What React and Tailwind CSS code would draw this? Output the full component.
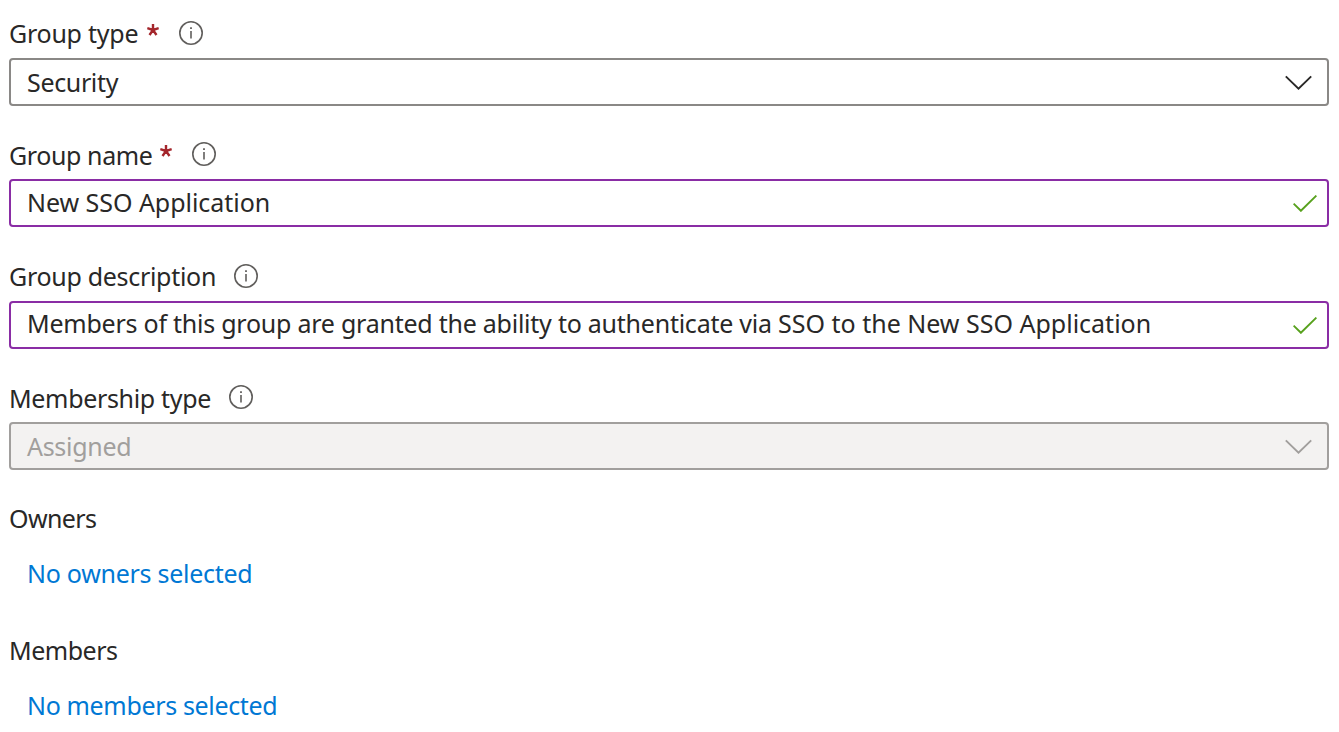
function InfoIcon({ className }) {
  return (
    <svg className={`size-6 shrink-0 ${className}`} viewBox="0 0 24 24" fill="none" stroke="#605e5c" aria-hidden="true">
      <circle cx="12" cy="12" r="11.2" strokeWidth="1.6" />
      <path d="M12 10v7.5" strokeWidth="1.6" />
      <path d="M12 6.2v1.9" strokeWidth="1.8" />
    </svg>
  );
}

function Asterisk({ className }) {
  return (
    <svg className={`mr-5 h-[12px] w-[12px] shrink-0 ${className}`} viewBox="0 0 12 12" fill="none" stroke="#a4262c" strokeWidth="2.4" aria-label="required">
      <path d="M6 6V0M6 6L.3 4.200M6 6l5.700-1.800M6 6l-3.500 5M6 6l3.500 5" />
    </svg>
  );
}

function Chevron() {
  return (
    <svg className="mr-[15px] h-[15px] w-[27px] shrink-0" viewBox="0 0 27 15" fill="none" stroke="currentColor" strokeWidth="1.9" aria-hidden="true">
      <path d="M.8 1.400l12.700 12.300L26.200 1.400" />
    </svg>
  );
}

function Check() {
  return (
    <svg className="mr-[10px] h-[17px] w-[24px] shrink-0" viewBox="0 0 24 17" fill="none" stroke="#57a11d" strokeWidth="1.9" aria-hidden="true">
      <path d="M.6 8.600l7.300 7.200L23.400.600" />
    </svg>
  );
}

function Field({ label, labelClass, asteriskClass, infoClass, value, valueClass, boxClass, children }) {
  return (
    <div className="mb-8 flex flex-col">
      <div className="flex h-[34px] items-center">
        <span className={`shrink-0 ${labelClass}`}>{label}</span>
        {asteriskClass && <Asterisk className={asteriskClass} />}
        <InfoIcon className={infoClass} />
      </div>
      <div className={`flex h-12 items-center justify-between rounded-[4px] border-2 pl-4 ${boxClass}`}>
        <span className={valueClass}>{value}</span>
        {children}
      </div>
    </div>
  );
}

export default function App() {
  return (
    <main className="flex h-[732px] w-[1339px] flex-col overflow-hidden bg-white pl-[9px] pr-[10px] pt-4 font-['Noto_Sans',sans-serif] text-[25px] leading-[34px] whitespace-nowrap text-[#292827]">
      <Field
        label="Group type"
        labelClass="w-[138px] tracking-[-0.25px]"
        asteriskClass="-mt-[7px]"
        infoClass="-mt-px"
        value="Security"
        valueClass="tracking-[-0.35px]"
        boxClass="mt-2 border-[#8a8886]"
      >
        <Chevron />
      </Field>
      <Field
        label="Group name"
        labelClass="w-[151px] tracking-[-0.4px]"
        asteriskClass="-mt-[9px]"
        infoClass="-mt-[3px]"
        value="New SSO Application"
        valueClass="-mt-[2px] tracking-[-0.04px]"
        boxClass="mt-[7px] border-[#8a2da5]"
      >
        <Check />
      </Field>
      <Field
        label="Group description"
        labelClass="w-[225px] tracking-[-0.3px]"
        infoClass="-mt-px"
        value={
          <>
            <span className="tracking-[-0.24px]">Members of this group are granted the ability to authenticate via </span>
            SSO to the New SSO Application
          </>
        }
        valueClass="-mt-[4px]"
        boxClass="mt-2 border-[#8a2da5]"
      >
        <Check />
      </Field>
      <Field
        label="Membership type"
        labelClass="w-[220px] tracking-[-0.33px]"
        infoClass="-mt-[3px]"
        value="Assigned"
        valueClass="tracking-[-0.3px]"
        boxClass="mt-[7px] border-[#a19f9d] bg-[#f3f2f1] text-[#a19f9d]"
      >
        <Chevron />
      </Field>
      <div className="-mt-px tracking-[-0.6px]">Owners</div>
      <a className="mt-[21px] pl-[18px] tracking-[-0.28px] text-[#0078d4]">No owners selected</a>
      <div className="mt-[43px] tracking-[-0.5px]">Members</div>
      <a className="mt-[21px] pl-[18px] tracking-[-0.35px] text-[#0078d4]">No members selected</a>
    </main>
  );
}
